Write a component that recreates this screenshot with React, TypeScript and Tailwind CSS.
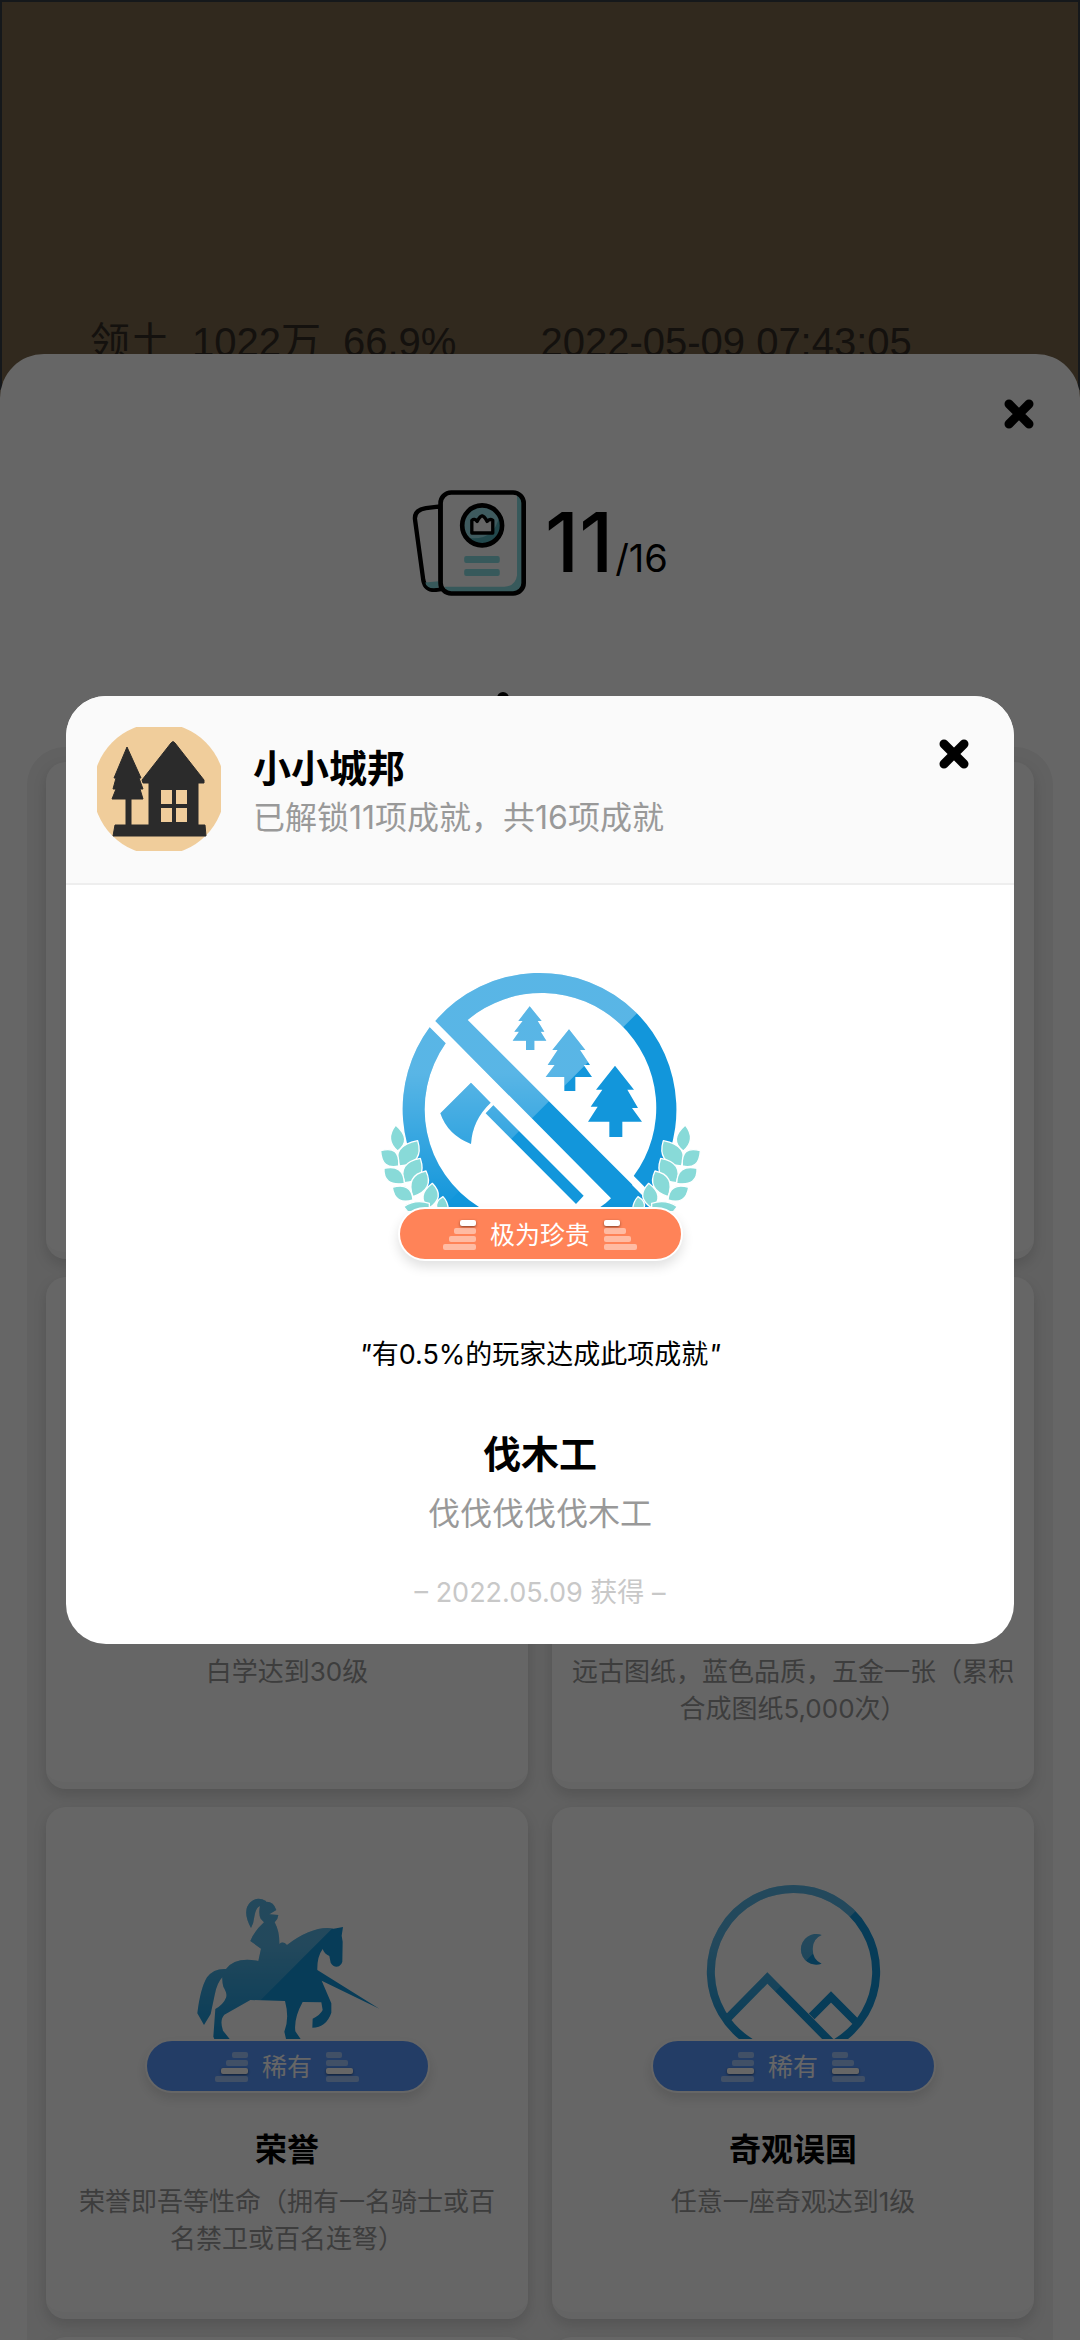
import type { ReactNode } from "react"
import { clsx } from "clsx"

const TREES = [
  "508,199 544,243 532,243 552,275 541,275 558,302 522,302 522,330 497,330 497,302 457,302 476,275 462,275 487,243 474,243",
  "626,268 675,330 659,330 689,375 670,375 695,411 645,411 645,453 612,453 612,411 556,411 583,375 562,375 592,330 576,330",
  "764,377 821,449 801,449 833,504 815,504 845,545 786,545 786,591 747,591 747,545 683,545 712,500 691,500 726,449 707,449",
]

const LEAVES = [
  "M106 555Q72 598 112 633Q157 600 106 555Z",
  "M172 602Q92 618 118 678Q193 670 172 602Z",
  "M61 632Q120 616 115 678Q64 690 61 632Z",
  "M180 655Q110 668 133 728Q202 722 180 655Z",
  "M71 685Q130 672 132 730Q68 740 71 685Z",
  "M197 693Q134 706 158 770Q223 748 197 693Z",
  "M96 742Q154 726 158 780Q104 796 96 742Z",
  "M216 730Q166 768 205 805Q257 772 216 730Z",
  "M130 800Q165 776 207 790L207 815L142 815Z",
  "M248 770Q222 785 230 806L264 806Q262 785 248 770Z",
]

type ArtProps = {
  id: string
  viewBox: string
  className: string
  diagonal: number
  fadeFrom: number
  fadeTo: number
  shape: (paint: string) => ReactNode
  children?: ReactNode
}

// Blue artwork with a glossy highlight over its upper left half
function Art({ id, viewBox, className, diagonal, fadeFrom, fadeTo, shape, children }: ArtProps) {
  return (
    <svg viewBox={viewBox} className={className} aria-hidden="true">
      <defs>
        <linearGradient id={`${id}-shine`} gradientUnits="userSpaceOnUse" x1="0" x2="0" y1={fadeFrom} y2={fadeTo}>
          <stop offset="0" stopColor="#fff" stopOpacity="0.3" />
          <stop offset="1" stopColor="#fff" stopOpacity="0" />
        </linearGradient>
        <clipPath id={`${id}-half`}>
          <path d={`M0 0H${diagonal}L0 ${diagonal}Z`} />
        </clipPath>
      </defs>
      {shape("#1296db")}
      <g clipPath={`url(#${id}-half)`}>{shape(`url(#${id}-shine)`)}</g>
      {children}
    </svg>
  )
}

function LumberjackArt() {
  return (
    <Art
      id="lumberjack"
      viewBox="-1 0 1080 801"
      className="w-[360px] h-[267px] overflow-visible"
      diagonal={1050}
      fadeFrom={400}
      fadeTo={800}
      shape={(paint) => (
        <path
          fill={paint}
          d={`M322 240L820 738L848 766L876 801H720Q738 790 752 775L225 243A412 412 0 0 1 828 218A412 412 0 0 1 855 770L820 708A344 344 0 0 0 322 240Z
            M208 262L256 310A344 344 0 0 0 356 801H250A412 412 0 0 1 208 262Z
            M332 428L391 488Q336 540 332 612Q262 585 240 520Z
            M399 496L670 767L647 792L376 520Z
            ${TREES.map(t => `M${t}Z`).join("")}`}
        />
      )}
    >
      <path d="M818 706L880 768L880 800L816 736Z" fill="#fff" />
      {[undefined, "translate(1081 0) scale(-1 1)"].map((transform, i) => (
        <g key={i} transform={transform} fill="#88dad8" stroke="#fff" strokeWidth="4" strokeLinejoin="round">
          {LEAVES.map(d => <path key={d} d={d} />)}
        </g>
      ))}
    </Art>
  )
}

function KnightArt() {
  return (
    <Art
      id="knight"
      viewBox="-10 0 1020 537"
      className="w-[340px] h-[179px]"
      diagonal={841}
      fadeFrom={250}
      fadeTo={540}
      shape={(paint) => (
        <path
          fill={paint}
          d="M437 123Q410 108 390 127Q364 152 392 204Q400 190 402 170Q406 142 419 138Q414 162 421 176L431 187Q400 215 390 243L422 266L414 303Q345 290 317 327Q280 325 260 352Q240 385 231 460L251 495L271 462L283 405Q290 368 306 352Q305 365 309 380Q322 402 317 413Q310 432 285 447L279 530L282 537H328L308 512Q297 480 312 464L390 420L494 423Q508 475 492 515L497 537H541L525 514Q520 475 547 426L603 427L607 450Q600 465 577 476L576 503Q618 502 633 458V430L604 362L777 446L591 330Q590 290 607 267Q612 282 627 288L631 308Q640 324 656 319Q664 314 666 305L667 245L664 227L668 201L640 206Q580 195 500 255Q488 242 477 252Q478 215 463 187Q473 178 474 165L447 163L468 150Q460 124 437 125Z"
        />
      )}
    />
  )
}

function WonderArt() {
  return (
    <Art
      id="wonder"
      viewBox="4 0 1020 537"
      className="w-[340px] h-[179px]"
      diagonal={855}
      fadeFrom={250}
      fadeTo={540}
      shape={(paint) => (
        <>
          <path
            fill="none"
            stroke={paint}
            strokeWidth="24"
            d="M516 87A248 248 0 1 1 515 87ZM320 473L437 354L640 559M570 469L628 411L703 486"
          />
          <path fill={paint} d="M600 225A46 46 0 1 0 600 311Q573 300 573 267Q573 236 600 225Z" />
        </>
      )}
    />
  )
}

function CardsIcon() {
  return (
    <svg viewBox="98 81 346 324" className="w-[115px] h-[108px]" aria-hidden="true">
      <path d="M183 133L140 138Q104 144 107 172L132 355Q138 386 170 384L185 382Z" fill="none" stroke="#000" strokeWidth="13" />
      <path d="M138 362L178 358V378Q142 384 138 362Z" fill="#8adfe4" />
      <rect x="184" y="90" width="250" height="305" rx="32" fill="#fff" />
      <path d="M414 100V340Q410 372 376 375H196Q200 392 220 392H402Q431 390 431 362V122Q428 106 414 100Z" fill="#8adfe4" />
      <rect x="184" y="91" width="250" height="304" rx="32" fill="none" stroke="#000" strokeWidth="14" />
      <circle cx="309" cy="190" r="60" fill="#9be0ea" />
      <path d="M361 160A60 60 0 0 1 262 227Q345 240 361 160Z" fill="#55b5bf" />
      <circle cx="309" cy="190" r="60" fill="none" stroke="#000" strokeWidth="14" />
      <path d="M278 213V175Q286 168 294 178Q304 160 309 162Q314 160 324 178Q332 168 341 175V213Z" fill="#fff" stroke="#000" strokeWidth="10" strokeLinejoin="round" />
      <rect x="255" y="282" width="107" height="21" rx="6" fill="#8adfe4" />
      <rect x="255" y="321" width="107" height="21" rx="6" fill="#8adfe4" />
    </svg>
  )
}

function GameLogo() {
  return (
    <svg viewBox="0 0 124 124" className="w-[124px] h-[124px] shrink-0" role="img" aria-label="小小城邦">
      <circle cx="62" cy="62" r="66" fill="#f0cd9b" />
      <g fill="#2b2b2b" stroke="#2b2b2b" strokeWidth="1" strokeLinejoin="round">
        <path d="M30 20L44 51H42L46 62H43L46 72H34V98H52V56H46L45 53L74 16Q76 13 78 16L107 53V56H101V98H108L109 109H16L18 98H29V72H15L19 62H16L19 51H17Z" />
      </g>
      <path d="M64 63h11v14h-11zM79 63h11v14h-11zM64 81h11v14h-11zM79 81h11v14h-11z" fill="#f0cd9b" />
    </svg>
  )
}

function CloseButton() {
  return (
    <button type="button" aria-label="关闭" className="flex p-2">
      <svg viewBox="0 0 30 30" className="w-[30px] h-[30px]">
        <path d="M5 5L25 25M25 5L5 25" stroke="#000" strokeWidth="9" strokeLinecap="round" />
      </svg>
    </button>
  )
}

const BAR_WIDTHS = ["w-[16px]", "w-[22px]", "w-[27px]", "w-[33px]"]

function Bars({ level, className }: { level: number; className: string }) {
  return (
    <span className={clsx("flex w-[33px] flex-col gap-[2px] pt-[2px]", className)}>
      {BAR_WIDTHS.map((width, i) => (
        <span key={width} className={clsx("h-[6px] rounded-[2px]", width, i === level ? "bg-white shadow-sm shadow-black/40" : "bg-white/45")} />
      ))}
    </span>
  )
}

function RarityPill({ label, level, className }: { label: string; level: number; className: string }) {
  return (
    <div className={clsx("relative flex h-[54px] w-[285px] items-center justify-center gap-[14px] rounded-full border-2 border-white text-[25px] leading-[36px] text-white shadow-[0_6px_12px_rgba(0,0,0,0.12)]", className)}>
      <Bars level={level} className="items-end" />
      <span className="pt-[2px]">{label}</span>
      <Bars level={level} className="items-start" />
    </div>
  )
}

type Achievement = {
  id: number
  art?: ReactNode
  rarity?: string
  title?: string
  description?: string
}

const achievements: Achievement[] = [
  { id: 1 },
  { id: 2 },
  { id: 3, description: "白学达到30级" },
  { id: 4, description: "远古图纸，蓝色品质，五金一张（累积\n合成图纸5,000次）" },
  { id: 5, art: <KnightArt />, rarity: "稀有", title: "荣誉", description: "荣誉即吾等性命（拥有一名骑士或百\n名禁卫或百名连弩）" },
  { id: 6, art: <WonderArt />, rarity: "稀有", title: "奇观误国", description: "任意一座奇观达到1级" },
  { id: 7 },
  { id: 8 },
]

function AchievementCard({ art, rarity, title, description }: Achievement) {
  return (
    <article className="flex flex-col items-center rounded-[20px] border-b-[7px] border-[#fafafa] bg-white text-center shadow-[0_6px_14px_rgba(0,0,0,0.14)]">
      <div className="flex h-[286px] flex-col items-center justify-end">
        {art}
        {rarity && <RarityPill label={rarity} level={2} className="bg-[#5899ff]" />}
      </div>
      <h3 className="mt-[35px] min-h-[44px] text-[32px] leading-[44px] font-bold">{title}</h3>
      <p className="mt-[11px] text-[26px] leading-[37px] whitespace-pre-line text-[#999]">{description}</p>
    </article>
  )
}

function AchievementModal() {
  return (
    <div role="dialog" aria-modal="true" aria-labelledby="game-name" className="w-full overflow-hidden rounded-[40px] bg-white">
      <header className="flex items-start gap-8 border-b-2 border-[#eee] bg-[#fafafa] pt-[31px] pr-[37px] pb-8 pl-[31px]">
        <GameLogo />
        <div className="flex-1 pt-[15px]">
          <h1 id="game-name" className="text-[38px] leading-[52px] font-bold">小小城邦</h1>
          <p className="text-[32px] leading-[48px] text-[#999]">已解锁11项成就，共16项成就</p>
        </div>
        <div className="pt-1">
          <CloseButton />
        </div>
      </header>
      <div className="flex flex-col items-center pt-[55px] pb-[31px] text-center">
        <LumberjackArt />
        <RarityPill label="极为珍贵" level={0} className="bg-[#ff8358]" />
        <p className="mt-[74px] text-[27px] leading-[40px]"><i>"</i>有0.5%的玩家达成此项成就<i>"</i></p>
        <h2 className="mt-[51px] text-[38px] leading-[56px] font-bold">伐木工</h2>
        <p className="mt-2 text-[32px] leading-[48px] text-[#999]">伐伐伐伐伐木工</p>
        <p className="mt-[35px] text-[27px] leading-[40px] text-[#c8c8c8]">– 2022.05.09 获得 –</p>
      </div>
    </div>
  )
}

export default function App() {
  return (
    <div className="relative flex h-screen flex-col overflow-hidden bg-[#7a674c] font-[Inter,'Noto_Sans_CJK_SC',sans-serif] text-black">
      <div className="flex h-[390px] shrink-0 gap-[22px] overflow-hidden border-x-2 border-t-2 border-[#363c44] pt-[316px] pl-[88px] font-['Liberation_Sans','Noto_Sans_CJK_SC',sans-serif] text-[40px] leading-[48px] whitespace-nowrap text-[#322b23]">
        <span>领土</span>
        <span>1022万</span>
        <span>66.9%</span>
        <span className="ml-[62px]">2022-05-09 07:43:05</span>
      </div>

      <main className="relative -mt-9 flex-1 rounded-t-[44px] bg-white">
        <div className="flex justify-end pt-[37px] pr-[38px]">
          <CloseButton />
        </div>
        <div className="mt-[50px] flex items-center justify-center gap-[18px]">
          <CardsIcon />
          <p className="flex items-baseline gap-[2px] text-[82px] leading-[112px] font-medium">
            11<span className="text-[38px] leading-[48px] font-normal">/16</span>
          </p>
        </div>
        <svg viewBox="0 0 140 24" className="mx-auto mt-[93px] h-[24px] w-[140px]" aria-hidden="true">
          <circle cx="33" cy="6" r="6" />
          <path d="M21 24a12 11 0 0 1 24 0z" />
        </svg>
        <section className="mx-[27px] mt-[31px] grid grid-cols-2 grid-rows-[497px_512px_512px_512px] gap-x-[24px] gap-y-[18px] rounded-[38px] bg-[#f2f2f2] px-[19px] py-[15px]">
          {achievements.map(item => <AchievementCard key={item.id} {...item} />)}
        </section>
      </main>

      <div className="absolute inset-0 flex items-center bg-black/60 px-[66px]">
        <AchievementModal />
      </div>
    </div>
  )
}
